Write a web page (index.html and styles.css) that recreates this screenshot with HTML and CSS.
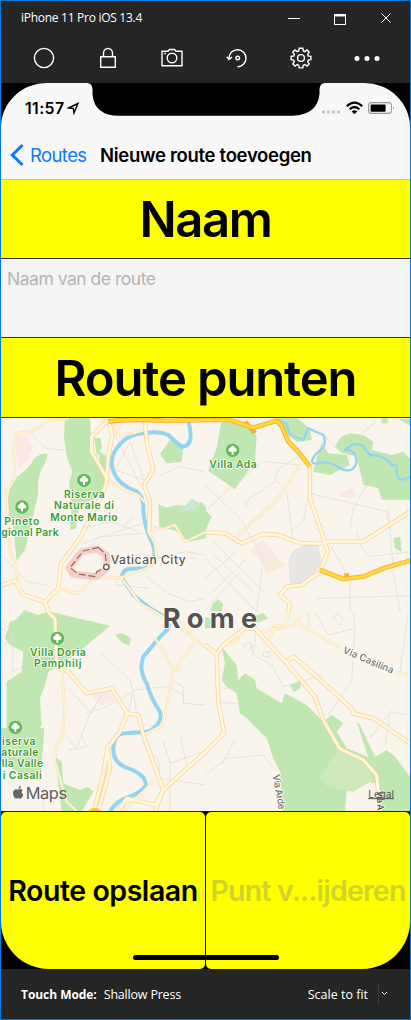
FILE: index.html
```html
<!DOCTYPE html>
<html lang="nl">
<head>
<meta charset="utf-8">
<title>iPhone 11 Pro iOS 13.4</title>
<link rel="stylesheet" href="styles.css">
</head>
<body>
<div class="window">
  <header class="titlebar">
    <span class="window-title">iPhone 11 Pro iOS 13.4</span>
    <svg class="window-controls" width="106" height="14" viewBox="0 0 106 14" fill="none" stroke="#fff">
      <path d="M0 6.500h12"/><path d="M46.500 2.500h11v10h-11z"/><path d="M46 3.500h12" stroke-width="2"/><path d="M93.500 1.500l9 9m0-9l-9 9"/>
    </svg>
  </header>
  <nav class="toolbar">
    <svg width="22" height="22" viewBox="0 0 22 22"><circle cx="11" cy="11" r="9.600"/></svg>
    <svg width="22" height="22" viewBox="0 0 22 22"><path d="M3.700 9.700h14.600v10.600H3.700zM6.500 9.500V6a4.500 4.500 0 0 1 9 0v3.500"/></svg>
    <svg width="22" height="22" viewBox="0 0 22 22"><path d="M1 4.200h6L8.500 2.500h5L15 4.200h6v14.500H1z"/><circle cx="11" cy="11" r="4.800"/><path d="M3.200 6.500h1.600"/></svg>
    <svg width="22" height="22" viewBox="0 0 22 22"><path d="M3 12.500V11a8.500 8.500 0 1 1 8.500 8.700M.8 9.800L3 12.600l3-2.600"/><circle cx="11.700" cy="11" r="1.800"/></svg>
    <svg width="22" height="22" viewBox="0 0 22 22"><path d="M9.200 1.200h3.600l.5 2.700 1.500.7 2.200-1.600 2.200 2.200-1.500 2.300.6 1.500 2.600.4v3.200l-2.600.5-.6 1.500 1.500 2.300-2.200 2.200-2.200-1.600-1.500.7-.5 2.700H9.200l-.5-2.700-1.500-.7L5 19.100l-2.200-2.200 1.500-2.300-.6-1.500-2.600-.5V9.400l2.600-.4.6-1.500-1.500-2.300L5 3l2.200 1.600 1.500-.7z"/><circle cx="11" cy="11" r="3.400"/></svg>
    <svg width="26" height="22" viewBox="0 0 26 22" class="dots"><circle cx="3" cy="11.500" r="2.500"/><circle cx="13" cy="11.500" r="2.500"/><circle cx="23" cy="11.500" r="2.500"/></svg>
  </nav>

  <main class="device">
    <div class="screen">
      <svg class="notch" width="238" height="33" viewBox="0 0 238 33"><path d="M0 0q5 0 5.500 6v5q1.500 21.800 27 21.800h173q25-1 27-21.800V6q.5-6 5.500-6z"/></svg>
      <div class="status">
        <span class="clock">11:57</span>
        <svg class="locate" width="13" height="13" viewBox="0 0 13 13"><path d="M1.500 6L11 1.500 7 11 6.400 6.500z"/></svg>
        <svg class="signals" width="76" height="16" viewBox="0 0 76 16">
          <g fill="#c5c5c7"><rect x="1" y="10.500" width="3" height="3"/><rect x="6" y="10.500" width="3" height="3"/><rect x="11" y="10.500" width="3" height="3"/><rect x="16" y="10.500" width="3" height="3"/></g>
          <g fill="none" stroke="#000" stroke-width="2.200"><path d="M25.800 6.200q7.700-7 15.400 0M28.700 9.200q4.800-4.400 9.600 0"/></g><path d="M30.700 11.400q2.800-2.200 5.600 0l-2.800 2.800z"/>
          <rect x="47.600" y="2.600" width="22.800" height="10.800" rx="3" fill="none" stroke="#9a9a9a" stroke-width="1.100"/><rect x="49.600" y="4.400" width="15" height="7.300" rx="1"/><path d="M72 6q1.600 2 0 4z" fill="#8b8b8b"/>
        </svg>
      </div>
      <div class="navbar">
        <svg width="14" height="24" viewBox="0 0 14 24"><path d="M12.500 2L2.300 12 12.500 22" fill="none" stroke="#0a7aff" stroke-width="3"/></svg>
        <span class="back">Routes</span>
        <span class="page-title">Nieuwe route toevoegen</span>
      </div>
      <h1 class="band band-name">Naam</h1>
      <div class="field"><span>Naam van de route</span></div>
      <h1 class="band band-points">Route punten</h1>
      <div class="map">
        <svg width="409" height="393" viewBox="3 9 1227 1179">
          <defs>
            <g id="tree"><circle r="20" fill="#62b75c"/><path d="M-3 13V5q-10 1-10-6 0-5 6-7 1-6 7-6t7 6q6 2 6 7 0 7-10 6v8z" fill="#fff"/></g>
            <g id="roads">
              <path d="M3 512L45 497 70 540 135 560 175 520 183 445 240 370 275 300 318 210 325 120 337 62 325 12M318 185L275 110 275 65 325 15"/>
              <path d="M135 560L145 591 165 612 170 755 205 770 260 835 335 820 382 895 415 900 430 960 490 1125 465 1188"/>
              <path d="M382 895L360 950 322 1000 310 1080 282 1188M322 1000L330 1060 300 1170M490 1125L615 1012 672 955 655 860 650 718 615 690"/>
              <path d="M650 718L670 690 735 640 765 640 810 690 860 745 945 845 970 915 1018 1000 1090 1035 1130 1080 1140 1188M857 742L880 725 945 780 1055 880 1060 895 1120 910 1230 985"/>
              <path d="M865 591L870 565 840 540 860 515 905 510 960 470 983 410 975 382 930 250 930 150M975 380L1090 380 1160 335 1230 290M975 384L900 385 835 360 790 357 725 385 675 355 615 352M355 1188L380 1150 465 1170 490 1125"/>
              <path d="M435 15L440 80 460 165 432 210 450 260 447 355"/>
            </g>
            <g id="streets">
              <path d="M205 12L150 15 95 50 50 55 40 100 45 190 20 230 30 400 45 450 65 540M185 755L195 890 188 960 165 1000 165 1040 200 1160 230 1188M705 370L765 315 830 255 850 225 905 145M335 20L360 65 435 45M300 15L325 18M320 190L365 220 415 240 435 262M447 355L525 330 555 380 615 352M285 485L360 488 440 460 470 430 465 385 447 355M175 520L235 535 285 480M365 490L420 565 480 600 540 640 615 695"/>
              <path d="M430 960L490 930 505 850 520 765 590 675 560 640 520 600M465 670L485 700 520 765 545 764M770 655L880 630 905 600M805 690L820 635 850 630 870 591M885 620L945 655 1020 697M1190 772L1230 780M925 591V638M665 692L713 680 718 650M370 1188L460 1100M965 390L945 375"/>
            </g>
          </defs>
          <rect x="3" y="9" width="1227" height="1179" fill="#f9f4ec"/>
          <g fill="#fae8e4"><path d="M50 62h30l18 30-15 45-30 25-5-40zM275 840l50-18 20 35-40 15zM765 390l25-15 38 45-40 25-35-40zM1015 235l45-20 10 30-40 5z"/><path d="M788 440l35-20 35 32-60 22z" fill="#f7ecd7"/></g>
          <path d="M865 435Q880 385 955 390L965 440 925 500 870 510z" fill="#e7e6e5"/>
          <g fill="#c0e6b1">
            <path d="M135 115q15 0 0 30-25 30-20 90L75 405 50 437 40 340 20 270 35 195q30-15 60-50 10-25 40-30z"/>
            <path d="M195 10h75l5 100 43 70-5 60-75 30-10 70-18 5 5-70-8-70 10-35-15-40-10-60z"/><path d="M283 70l18-2 5 30-15 25zM295 108l25 15-5 60-12-20z"/>
            <path d="M510 75l40 25-5 40-45 5-20-28zM475 268l25 10 30-8 45 5 30-15 13 15v95l-50 10-45-35-45-8z"/><path d="M575 250l25 15-15 20-45 5z" fill="#cae8cf"/>
            <path d="M665 18h60l45 45-5 75-60 85-80-55 25-70zM820 10h70l40 30 5 35-45 5-55-45zM965 85l20 30 55 5 10 30-60 30-50-10 10-40zM1050 55l40 5 30 20-5 25 60 15 35-10 20 20v124l-15 0-70 0-10-35-45-10-20-85-45-10-20-20 20-30zM1145 10h18v15h-18zM1195 12h35v20zM1180 370l20-5 5 45-20-10zM615 285l20 20-20 45zM640 565l15-12 15 15-5 20h-35z"/>
            <path d="M60 610h15l75-20 180 42-105 88-80 50-10 40-15 40 5 80-35 50H20V800l45-30 5-60-40-20-15-20 15-50z"/>
            <path d="M73 585l40 15-15 30-50-15zM345 660l20-6 28 15-5 24-18-8zM165 1025l20 15 5 65 50 20 25-10 15 15-35 60h-60z"/><path d="M3 940h130l-5 70-5 70-40 10-80-50z"/>
            <path d="M665 695l45 55 5 45 20-20 30 20 5 25 75 45 10-30 65 35 50 50 25-20 35 25-20 25 30 50 75 30 20 50-10 25-20-5-65 30-5 58H850l-10-118-20-40-20-60-60-60-20-15-10-60-30-20-15-20 10-50zM870 810l35-15-5 25-18 12zM1070 920l10 10 45 95 35-20 25 20 45 60v103h-95l-10-100zM755 605l35-10 15 15-35 15zM615 605l35 10-15 25h-20z"/>
          </g>
          <path d="M1015 1000l95 50 10 45-60 35-80-15-20-30z" fill="#cde8bb"/>
          <g fill="none" stroke="#e0dcd5" stroke-width="2">
            <path d="M95 60L140 100 230 110M370 15L345 60 420 210M345 165L435 195M345 165L390 80 430 190M245 385L430 325 475 340M265 400L300 365 430 355M320 440L410 420 590 430M250 340L330 320 420 350M5 420L80 500 140 510M440 485L505 535 570 560 615 550M480 180L540 155 610 170M400 300L370 340M470 430L560 410 615 420M370 465L345 510 450 520M10 620l30 40-30 35"/>
            <path d="M205 820L275 895 305 840 270 895 230 1000 195 960M205 1005L260 995 245 960M260 895L320 875 400 830 410 900M5 640L38 660 38 770 65 755M400 825L505 815 550 840V865L615 870M525 800L550 815V865M300 710L390 795 400 830 385 890M425 980L475 1035 480 1090 615 1110M490 980L510 1045 610 1010M510 1040V1188M540 960L560 1050M130 1120V1188"/>
            <path d="M615 210L720 310 790 430 770 591M615 290L700 210 790 140 905 150M740 280L735 260 825 200 835 160 920 110M830 200L860 230 880 380M615 430L770 591M635 415L760 530M615 490L710 410M640 530L740 430M620 580L720 470M640 380L790 530M930 235L1160 290 1170 340M925 240L910 320 870 350M990 390L1020 440 1050 500V591M1070 350L1080 390 1110 425 1230 410M1050 340L1060 280 1100 210 1080 170M1165 280L1180 470 1200 591M950 550L1230 542M1020 170L1090 50 1130 20M975 65L1020 110"/>
            <path d="M750 680L760 720 815 750 850 815 970 780M770 630L760 720M790 710h20v15h-20zM730 690l20-10 10 15-15 10zM945 591L985 660 1065 640 1060 591M1065 640L1055 800 985 900M1225 591L1200 770M1110 970L1170 890 1230 900M1155 990L1170 890M615 1080L680 1030 790 1020 820 1060M690 970L705 975 665 1050M665 820L710 820 750 780M665 860L730 870M1000 610l10-15 20 15-10 20z"/>
          </g>
          <g fill="none" stroke="#93d5f0" stroke-linejoin="round">
            <path stroke-width="12" d="M565 20Q570 35 572 60 572 95 545 95 525 80 505 60 475 45 410 57 375 65 350 100 325 135 342 173 355 208 410 230 432 245 430 285 432 325 450 370 470 405 460 440L435 460 385 462Q360 470 370 495L400 540 450 580 500 610Q520 635 485 660L430 725Q415 765 440 805 455 855 480 890 490 925 445 950L375 955Q340 955 340 1005 340 1045 385 1060 440 1080 437 1112 420 1137 375 1150 350 1160 330 1188"/>
            <path stroke-width="7" d="M835 15L860 25 870 60 910 75 925 40 970 60Q985 90 950 115 920 150 955 145 990 135 1020 160 1060 180 1070 140 1065 100 1035 105 1070 75 1090 95L1110 120Q1155 120 1175 150L1190 152 1190 180Q1200 205 1230 185"/>
          </g>
          <g fill="none" stroke-linejoin="round">
            <use href="#streets" stroke="#f8dab3" stroke-width="8"/><use href="#roads" stroke="#f8cda0" stroke-width="13"/>
            <use href="#streets" stroke="#fff6d4" stroke-width="5"/><use href="#roads" stroke="#fff8d3" stroke-width="9"/>
            <path d="M325 20Q390 10 500 18L615 15 690 15 760 38 820 20Q842 15 850 45L865 80 890 105 930 155M735 20L765 55M960 465L1030 492 1090 485 1150 460 1230 437M1040 475V490" stroke="#f5ad3d" stroke-width="14"/><path d="M325 20Q390 10 500 18L615 15 690 15 760 38 820 20Q842 15 850 45L865 80 890 105 930 155M960 465L1030 492 1090 485 1150 460 1230 437" stroke="#ffd936" stroke-width="9"/>
          </g>
          <path d="M265 1188q20-20 38 0z" fill="#ffc52b"/>
          <path d="M290 402L320 420 320 460 290 485 220 478 207 458 245 410z" fill="none" stroke="#f5c8c2" stroke-opacity=".85" stroke-width="21" stroke-linejoin="round"/>
          <path d="M295 397L316 417 320 455 290 470 285 485 235 477 210 458 250 408z" fill="none" stroke="#a35d58" stroke-width="3.500" stroke-dasharray="21 8"/>
          <circle cx="319" cy="456" r="8" fill="#fff" stroke="#645f5d" stroke-width="4"/>
          <use href="#tree" x="252" y="196"/><use href="#tree" x="66" y="276"/><use href="#tree" x="698" y="106"/><use href="#tree" x="172" y="670"/><use href="#tree" x="46" y="937"/>
          <g class="park-label">
            <text x="192" y="249" textLength="122">Riserva</text><text x="162" y="283" textLength="180">Naturale di</text><text x="151" y="317" textLength="202">Monte Mario</text>
            <text x="13" y="329" textLength="105">Pineto</text><text x="4" y="362" textLength="172">gional Park</text>
            <text x="628" y="159" textLength="142">Villa Ada</text><text x="90" y="722" textLength="167">Villa Doria</text><text x="102" y="756" textLength="142">Pamphilj</text>
            <text x="6" y="989" textLength="100">iserva</text><text x="4" y="1023" textLength="111">aturale</text><text x="5" y="1057" textLength="124">lla Valle</text><text x="8" y="1091" textLength="117">i Casali</text>
          </g>
          <text class="place" x="332" y="447" textLength="225">Vatican City</text>
          <text class="city" x="488" y="638" textLength="284">Rome</text>
          <text class="road" transform="translate(1027 713) rotate(23)" textLength="162">Via Casilina</text>
          <text class="road" transform="translate(818 1080) rotate(80)" textLength="106">Via Arde</text>
          <text class="road dark" transform="translate(1130 1128) rotate(88)" textLength="58">Via A</text>
          <path transform="translate(39 1112)" fill="#656565" d="M16 9q1-8 8-9 1 8-8 9zM16 12q8-4 13 1-7 7 2 14-5 13-11 12l-5-2-5 2Q1 36 0 22 2 8 16 12z"/>
          <text class="brand" x="77" y="1153" textLength="124">Maps</text>
          <text class="legal" x="1105" y="1149" textLength="77">Legal</text><path d="M1105 1151h77" stroke="#555" stroke-width="3"/>
        </svg>
      </div>
      <div class="actions">
        <div class="action"><span class="save">Route opslaan</span></div>
        <div class="action disabled"><span class="remove">Punt v...ijderen</span></div>
      </div>
      <div class="home-indicator"></div>
    </div>
  </main>

  <footer class="footer">
    <b class="mode">Touch Mode:</b><span class="press">Shallow Press</span>
    <span class="scale">Scale to fit</span>
    <svg width="14" height="22" viewBox="0 0 14 22" fill="none"><path d="M.5 0v22" stroke="#3d3d3d"/><path d="M4 9l2.500 2.500L9 9" stroke="#fff"/></svg>
  </footer>
</div>
</body>
</html>
```
FILE: styles.css
```css
* { box-sizing: border-box; }
body { margin: 0; background: #252525; }
.window { width: 411px; height: 1020px; border: 1px solid #0078d7; background: #252525; color: #fff; font-family: "Open Sans", sans-serif; display: flex; flex-direction: column; overflow: hidden; }
.window svg { display: block; flex: none; }
.titlebar { height: 36px; padding: 0 16px 2px 20px; display: flex; align-items: center; justify-content: space-between; font-size: 12px; }
.window-title { letter-spacing: -.28px; padding-bottom: 1px; }
.window-controls { margin-top: 2px; }
.toolbar { height: 46px; padding: 0 30px 4px 32px; display: flex; align-items: center; justify-content: space-between; }
.toolbar svg { fill: none; stroke: #fff; stroke-width: 1.4; }
.toolbar .dots { fill: #fff; stroke: none; }
.device { height: 886px; background: #000; }
.screen { position: relative; height: 886px; background: #f8f8f8; color: #000; border-radius: 46px 46px 48px 48px / 44px 44px 48px 48px; overflow: hidden; font-family: Inter, sans-serif; display: flex; flex-direction: column; }
.notch { position: absolute; left: 86px; top: 0; }
.status { height: 50px; padding: 0 13px 0 24px; display: flex; align-items: center; }
.clock { font-size: 15.8px; font-weight: 600; letter-spacing: .4px; }
.locate { margin-left: 3px; fill: none; stroke: #000; stroke-width: 1.4; }
.signals { margin-left: auto; }
.navbar { height: 47px; padding: 0 0 2px 9px; display: flex; align-items: center; border-bottom: 1px solid #c9c98a; }
.back { color: #0a7aff; font-size: 18.5px; margin-left: 6px; width: 70px; letter-spacing: -.6px; }
.page-title { font-size: 18.5px; font-weight: 600; letter-spacing: -.3px; white-space: nowrap; }
.band { margin: 0; background: #ff0; border-bottom: 1px solid #333; display: flex; align-items: center; justify-content: center; font-size: 49px; line-height: 77px; padding-top: 1px; font-weight: 600; height: 79px; letter-spacing: -1.4px; white-space: nowrap; }
.band-points { height: 80px; letter-spacing: -1.15px; }
.field { height: 79px; padding: 8px 6px; background: #f4f4f4; border-bottom: 1px solid #333; color: #b5b5b5; font-size: 17.5px; line-height: 23px; letter-spacing: -.48px; }
.map { height: 393px; }
.map text { font-family: Inter, sans-serif; stroke: #fffdf8; stroke-width: 5px; stroke-linejoin: round; paint-order: stroke; }
.map .park-label text { font-size: 31px; font-weight: 600; fill: #3d9b35; }
.map .place { font-size: 36px; font-weight: 500; fill: #5b5552; }
.map .city { font-size: 82px; font-weight: 700; fill: #555352; }
.map .road { font-size: 29px; font-weight: 500; fill: #706e6c; }
.map .dark { font-size: 26px; fill: #444; }
.map .brand { font-size: 49px; font-weight: 400; fill: #5f5f5f; stroke: none; }
.map .legal { font-size: 29px; font-weight: 500; fill: #666; stroke: none; }
.actions { height: 158px; background: #000; border-top: 1px solid #222; display: grid; grid-template-columns: 204px 204px; gap: 1px; }
.action { height: 157px; border-radius: 5px; background: #ff0; display: flex; justify-content: center; align-items: center; padding-bottom: 1px; font-size: 28.5px; font-weight: 600; white-space: nowrap; letter-spacing: -.45px; }
.disabled { color: #d2d22c; letter-spacing: -.8px; }
.home-indicator { position: absolute; left: 132px; bottom: 9px; width: 146px; height: 5px; border-radius: 3px; background: #000; }
.footer { height: 50px; display: flex; align-items: center; padding: 0 18px 0 20px; font-size: 12.5px; }
.mode { font-size: 12px; letter-spacing: -.05px; }
.press { margin-left: 7px; letter-spacing: -.2px; }
.scale { margin-left: auto; margin-right: 10px; letter-spacing: 0; }
```
